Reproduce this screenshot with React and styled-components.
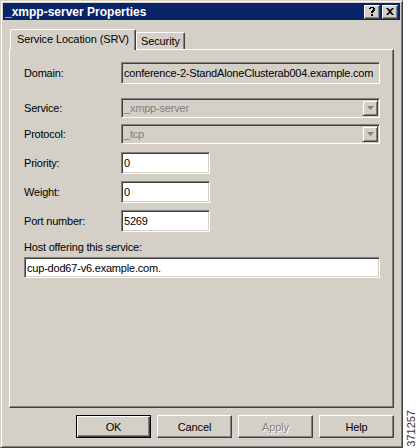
import React from "react";
import styled, { createGlobalStyle } from "styled-components";

const Global = createGlobalStyle`
  html, body { margin: 0; padding: 0; background: #ffffff; }
  body { font-family: "Liberation Sans", Arial, sans-serif; font-size: 11px; }
`;

const Page = styled.div`
  display: flex;
  width: 416px;
  height: 448px;
`;

const Window = styled.div`
  box-sizing: border-box;
  width: 403px;
  height: 448px;
  background: #d4d0c8;
  border: 1px solid;
  border-color: #d4d0c8 #404040 #404040 #d4d0c8;
  box-shadow: inset 1px 1px #ffffff, inset -1px -1px #808080;
  padding: 2px;
  display: flex;
  flex-direction: column;
`;

const TitleBar = styled.div`
  height: 17px;
  background: #0a246a;
  display: flex;
  align-items: center;
  padding: 0 2px 0 2px;
  color: #fff;
  font-weight: bold;
  font-size: 12px;
`;

const Title = styled.div`
  flex: 1;
  white-space: nowrap;
`;

const CapBtn = styled.div`
  box-sizing: border-box;
  width: 16px;
  height: 14px;
  margin-left: ${(p) => (p.$gap ? "2px" : "0")};
  background: #d4d0c8;
  border: 1px solid;
  border-color: #ffffff #404040 #404040 #ffffff;
  box-shadow: inset -1px -1px #808080;
  display: flex;
  align-items: center;
  justify-content: center;
  color: #000;
`;

const Content = styled.div`
  flex: 1;
  display: flex;
  flex-direction: column;
  padding: 9px 6px 0 6px;
`;

const TabRow = styled.div`
  display: flex;
  align-items: flex-end;
  height: 20px;
  position: relative;
  z-index: 1;
  padding-left: 1px;
`;

const Tab = styled.div`
  box-sizing: border-box;
  height: ${(p) => (p.$active ? "21px" : "17px")};
  padding: ${(p) => (p.$active ? "3px 6px 0 6px" : "2px 4px 0 4px")};
  margin-left: ${(p) => (p.$active ? "0" : "-0px")};
  margin-bottom: ${(p) => (p.$active ? "-1px" : "0")};
  background: #d4d0c8;
  border-top: 1px solid #ffffff;
  border-left: 1px solid #ffffff;
  border-right: 1px solid #404040;
  box-shadow: inset -1px 0 #808080;
  border-radius: 2px 2px 0 0;
  font-size: 11px;
  letter-spacing: -0.1px;
  white-space: nowrap;
  color: #000;
`;

const Panel = styled.div`
  box-sizing: border-box;
  height: 359px;
  border: 1px solid;
  border-color: #ffffff #404040 #404040 #ffffff;
  box-shadow: inset -1px -1px #808080;
  padding: 12px 13px 0 14px;
  display: flex;
  flex-direction: column;
`;

const Row = styled.div`
  display: grid;
  grid-template-columns: ${(p) => (p.$full ? "1fr" : "97px 1fr")};
  align-items: center;
  margin-top: ${(p) => p.$mt}px;
`;

const Label = styled.div`
  font-size: 11px;
  letter-spacing: -0.2px;
  color: #000;
  white-space: nowrap;
  margin-top: ${(p) => p.$mt || 0}px;
`;

const Field = styled.div`
  box-sizing: border-box;
  height: ${(p) => p.$h || 22}px;
  width: ${(p) => (p.$w ? p.$w + "px" : "100%")};
  background: ${(p) => (p.$grey ? "#d4d0c8" : "#ffffff")};
  border: 1px solid;
  border-color: #808080 #ffffff #ffffff #808080;
  box-shadow: inset 1px 1px #404040, inset -1px -1px #d4d0c8;
  padding: 0 2px;
  display: flex;
  align-items: center;
  font-size: 11px;
  letter-spacing: -0.2px;
  color: ${(p) => (p.$disabled ? "#808080" : "#000")};
  white-space: nowrap;
  overflow: hidden;
`;

const FieldText = styled.span`
  flex: 1;
`;

const DropBtn = styled.div`
  box-sizing: border-box;
  width: 16px;
  height: 16px;
  margin-right: -1px;
  background: #d4d0c8;
  border: 1px solid;
  border-color: #d4d0c8 #404040 #404040 #d4d0c8;
  box-shadow: inset 1px 1px #ffffff, inset -1px -1px #808080;
  display: flex;
  align-items: center;
  justify-content: center;
`;

const Footer = styled.div`
  display: flex;
  justify-content: flex-end;
  gap: 6px;
  margin-top: 7px;
`;

const Button = styled.div`
  box-sizing: border-box;
  width: 75px;
  height: 23px;
  background: #d4d0c8;
  border: 1px solid;
  border-color: ${(p) =>
    p.$default ? "#000 #000 #000 #000" : "#ffffff #404040 #404040 #ffffff"};
  box-shadow: ${(p) =>
    p.$default
      ? "inset 1px 1px #ffffff, inset -1px -1px #404040, inset -2px -2px #808080"
      : "inset -1px -1px #808080"};
  display: flex;
  align-items: center;
  justify-content: center;
  font-size: 11px;
  letter-spacing: -0.1px;
  color: ${(p) => (p.$disabled ? "#808080" : "#000")};
  text-shadow: ${(p) => (p.$disabled ? "1px 1px #ffffff" : "none")};
`;

const Side = styled.div`
  flex: 1;
  display: flex;
  align-items: flex-end;
  justify-content: flex-end;
  padding: 0 0 1px 0;
`;

const FigNum = styled.div`
  writing-mode: vertical-rl;
  transform: rotate(180deg);
  font-size: 11px;
  line-height: 10px;
  color: #333;
`;

const Arrow = ({ color = "#808080" }) => (
  <svg width="7" height="4" viewBox="0 0 7 4">
    <path d="M0 0h7L3.5 4z" fill={color} />
  </svg>
);

export default function App() {
  return (
    <>
      <Global />
      <Page>
        <Window>
          <TitleBar>
            <Title>_xmpp-server Properties</Title>
            <CapBtn>
              <svg width="8" height="9" viewBox="0 0 8 9">
                <path d="M1 1h1V0h4v1h1v3H6v1H5v1H3V4h1V3h1V1H3v1H1z" fill="#000" />
                <rect x="3" y="7" width="2" height="2" fill="#000" />
              </svg>
            </CapBtn>
            <CapBtn $gap>
              <svg width="8" height="7" viewBox="0 0 8 7">
                <path d="M0 0h2l2 2 2-2h2L5 3.5 8 7H6L4 5 2 7H0l3-3.5z" fill="#000" />
              </svg>
            </CapBtn>
          </TitleBar>
          <Content>
            <TabRow>
              <Tab $active>Service Location (SRV)</Tab>
              <Tab>Security</Tab>
            </TabRow>
            <Panel>
              <Row $mt={0}>
                <Label>Domain:</Label>
                <Field $grey $h={22}>
                  conference-2-StandAloneClusterab004.example.com
                </Field>
              </Row>
              <Row $mt={14}>
                <Label>Service:</Label>
                <Field $grey $disabled $h={20}>
                  <FieldText>_xmpp-server</FieldText>
                  <DropBtn><Arrow /></DropBtn>
                </Field>
              </Row>
              <Row $mt={6}>
                <Label>Protocol:</Label>
                <Field $grey $disabled $h={20}>
                  <FieldText>_tcp</FieldText>
                  <DropBtn><Arrow /></DropBtn>
                </Field>
              </Row>
              <Row $mt={8}>
                <Label>Priority:</Label>
                <Field $w={89}>0</Field>
              </Row>
              <Row $mt={7}>
                <Label>Weight:</Label>
                <Field $w={89}>0</Field>
              </Row>
              <Row $mt={7}>
                <Label>Port number:</Label>
                <Field $w={89}>5269</Field>
              </Row>
              <Label $mt={9}>Host offering this service:</Label>
              <Row $mt={4} $full>
                <Field $h={21}>cup-dod67-v6.example.com.</Field>
              </Row>
            </Panel>
            <Footer>
              <Button $default>OK</Button>
              <Button>Cancel</Button>
              <Button $disabled>Apply</Button>
              <Button>Help</Button>
            </Footer>
          </Content>
        </Window>
        <Side>
          <FigNum>371257</FigNum>
        </Side>
      </Page>
    </>
  );
}
